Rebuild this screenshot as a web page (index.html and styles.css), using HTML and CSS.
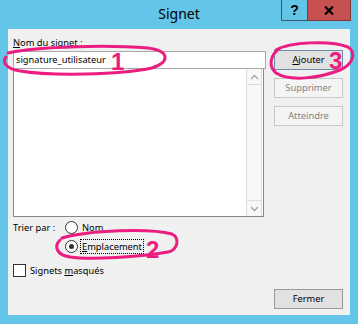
FILE: index.html
```html
<!DOCTYPE html>
<html lang="fr">

<head>
    <meta charset="UTF-8">
    <title>Signet</title>
    <link rel="stylesheet" href="styles.css">
</head>

<body>
    <!-- Dialog window with its frame -->
    <div class="window">
        <div class="titlebar">
            <span></span>
            <span class="title">Signet</span>
            <div class="caption-buttons">
                <span class="cap-btn cap-help">?</span>
                <span class="cap-btn cap-close">
                    <svg width="10" height="9" viewBox="0 0 10 9">
                        <path d="M1 0.5 L9 8.5 M9 0.5 L1 8.5" stroke="#000" stroke-width="2.2" />
                    </svg>
                </span>
            </div>
        </div>

        <!-- Client area -->
        <div class="client">
            <div class="left-col">
                <div class="field-label"><u>N</u>om du signet :</div>
                <div class="name-input">signature_utilisateur</div>

                <div class="list-box">
                    <div class="list-items"></div>
                    <div class="scrollbar">
                        <span class="scroll-arrow">
                            <svg width="9" height="6" viewBox="0 0 9 6">
                                <path d="M1 5 L4.5 1.5 L8 5" fill="none" stroke="#a2a2a2" stroke-width="1.3" />
                            </svg>
                        </span>
                        <span class="scroll-track"></span>
                        <span class="scroll-arrow">
                            <svg width="9" height="6" viewBox="0 0 9 6">
                                <path d="M1 1 L4.5 4.5 L8 1" fill="none" stroke="#a2a2a2" stroke-width="1.3" />
                            </svg>
                        </span>
                    </div>
                </div>

                <div class="sort-row">
                    <span class="sort-label">Trier par :</span>
                    <div class="radio-group">
                        <div class="radio"><span class="radio-dot"></span><span class="radio-text">Nom</span></div>
                        <div class="radio radio-checked"><span class="radio-dot"></span><span class="radio-text focus-rect"><u>E</u>mplacement</span></div>
                    </div>
                </div>

                <div class="check-row"><span class="check-box"></span><span>Signets <u>m</u>asqués</span></div>
            </div>

            <div class="right-col">
                <div class="btn btn-default"><u>A</u>jouter</div>
                <div class="btn btn-disabled">Supprimer</div>
                <div class="btn btn-disabled">Atteindre</div>
                <div class="btn btn-close">Fermer</div>
            </div>
        </div>

        <!-- Hand drawn marks laid over the dialog -->
        <svg class="annotations" width="358" height="324" viewBox="0 0 358 324">
            <g fill="none" stroke="#ec1c80" stroke-width="3" stroke-linecap="round">
                <path d="M8 53 C40 46, 110 45, 148 48 C170 51, 170 62, 152 68 C120 75, 50 76, 20 71 C6 69, 2 62, 6 57" />
                <path d="M62 238 C90 230, 150 228, 172 234 C180 238, 178 250, 168 252 C140 257, 90 260, 70 257 C56 255, 54 246, 60 240" />
                <path d="M276 50 C290 42, 330 40, 348 47 C356 52, 354 64, 340 70 C320 78, 290 82, 276 73 C268 66, 270 55, 280 48" />
            </g>
            <g class="marks">
                <text x="111" y="70">1</text>
                <text x="146" y="258">2</text>
                <text x="329" y="69">3</text>
            </g>
        </svg>
    </div>
</body>

</html>
```

FILE: styles.css
```css
body {
    margin: 0;
    font-family: "Noto Sans", "Open Sans", sans-serif;
    font-size: 9.3px;
    color: #000;
}

u {
    text-decoration-thickness: 1px;
    text-underline-offset: 1px;
}

/* Window frame */
.window {
    position: relative;
    width: 358px;
    height: 324px;
    background-color: #63c6e9;
    display: flex;
    flex-direction: column;
}

.titlebar {
    height: 29px;
    display: grid;
    grid-template-columns: 1fr auto 1fr;
}

.title {
    font-size: 14px;
    line-height: 28px;
}

.caption-buttons {
    justify-self: end;
    display: flex;
    margin-right: 7px;
    height: 21px;
}

.cap-btn {
    display: flex;
    align-items: center;
    justify-content: center;
    border: 1px solid #3a5a66;
    border-top: none;
    font-weight: bold;
    font-family: "Liberation Sans", sans-serif;
    font-size: 14px;
}

.cap-help {
    width: 25px;
}

.cap-close {
    width: 42px;
    border-left: none;
    border-color: #7c3a36;
    background-color: #c75050;
}

/* Client area */
.client {
    flex: 1;
    margin: 0 8px 9px 8px;
    background-color: #f0f0f0;
    display: grid;
    grid-template-columns: 253px 69px;
    column-gap: 8px;
    padding: 6px 0 6px 5px;
}

.left-col {
    display: flex;
    flex-direction: column;
}

.field-label {
    line-height: 15px;
    margin-bottom: 1px;
}

.name-input {
    height: 18px;
    box-sizing: border-box;
    border: 1px solid #a8a8a8;
    background-color: #fff;
    padding-left: 2px;
    line-height: 16px;
}

.list-box {
    width: 251px;
    height: 148px;
    box-sizing: border-box;
    border: 1px solid #828790;
    border-top: none;
    background-color: #fff;
    display: flex;
}

.list-items {
    flex: 1;
}

.scrollbar {
    width: 14px;
    margin-right: 1px;
    display: flex;
    flex-direction: column;
    border-left: 1px solid #dcdcdc;
    border-right: 1px solid #dcdcdc;
    background-color: #f8f8f8;
}

.scroll-arrow {
    height: 15px;
    display: flex;
    align-items: center;
    justify-content: center;
}

.scroll-track {
    flex: 1;
    border-top: 1px solid #dcdcdc;
    border-bottom: 1px solid #dcdcdc;
}

.sort-row {
    display: flex;
    margin-top: 3px;
}

.sort-label {
    width: 52px;
    line-height: 15px;
    white-space: nowrap;
}

.radio-group {
    display: flex;
    flex-direction: column;
    gap: 4px;
}

.radio {
    display: flex;
    align-items: center;
    line-height: 15px;
}

.radio-dot {
    width: 13px;
    height: 13px;
    box-sizing: border-box;
    border: 1px solid #333;
    border-radius: 50%;
    background-color: #fff;
    display: flex;
    align-items: center;
    justify-content: center;
    margin-right: 4px;
}

.radio-checked .radio-dot::after {
    content: "";
    width: 5px;
    height: 5px;
    border-radius: 50%;
    background-color: #333;
}

.focus-rect {
    border: 1px dotted #000;
    padding: 0 1px;
    margin-left: -2px;
    line-height: 13px;
}

.check-row {
    display: flex;
    align-items: center;
    margin-top: 9px;
    line-height: 15px;
}

.check-box {
    width: 13px;
    height: 13px;
    box-sizing: border-box;
    border: 1px solid #333;
    background-color: #fff;
    margin-right: 4px;
}

/* Buttons on the right */
.right-col {
    display: flex;
    flex-direction: column;
    gap: 8px;
    padding-top: 15px;
}

.btn {
    height: 20px;
    box-sizing: border-box;
    border: 1px solid #adadad;
    background-color: #e1e1e1;
    text-align: center;
    line-height: 18px;
}

.btn-default {
    border-color: #6f8aa3;
}

.btn-disabled {
    background-color: #f4f4f4;
    border-color: #c8c8c8;
    color: #838383;
}

.btn-close {
    margin-top: auto;
    border-color: #9a9a9a;
}

/* Annotation layer */
.annotations {
    position: absolute;
    left: 0;
    top: 0;
    pointer-events: none;
}

.marks text {
    font-family: "Liberation Sans", sans-serif;
    font-weight: bold;
    font-size: 24px;
    fill: #ec1c80;
}
```
